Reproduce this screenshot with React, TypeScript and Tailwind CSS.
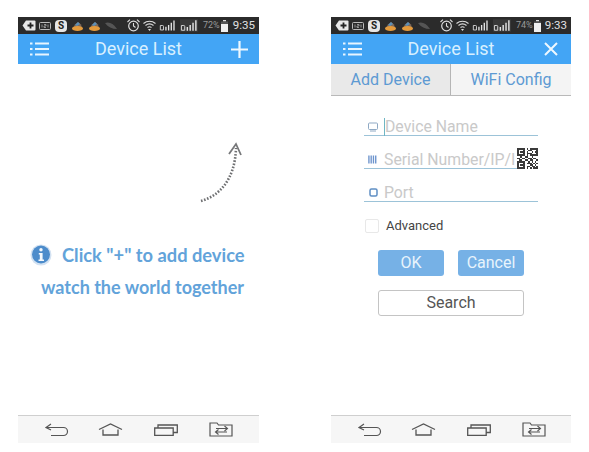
import React from "react";

const Sans = '[font-family:Roboto,"Liberation_Sans",sans-serif]';

function PlusBadge() {
  return (
    <svg width="14" height="11" viewBox="0 0 14 11" className="shrink-0">
      <path d="M4 0.500H12.500a1 1 0 0 1 1 1v8a1 1 0 0 1-1 1H4L0.500 5.500Z" fill="#e8e8e8" />
      <path d="M8.500 2.500v6M5.500 5.500h6" stroke="#222" strokeWidth="1.800" />
    </svg>
  );
}
function KeyBox() {
  return (
    <svg width="12" height="9" viewBox="0 0 12 9" className="shrink-0">
      <rect x="0.500" y="1.500" width="11" height="7" rx="1" fill="none" stroke="#bbb" strokeWidth="1" />
      <path d="M3 3.500v3M5 3.500h2v1.500H5v1.500h2M9 3.500v3" stroke="#bbb" strokeWidth="0.700" fill="none" />
    </svg>
  );
}
function SkypeIcon() {
  return (
    <span className="w-[12px] h-[12px] rounded-[4px] bg-[#e6e6e6] text-[#222] text-[10px] leading-[12px] font-bold text-center shrink-0">
      S
    </span>
  );
}
function Cloud() {
  return (
    <svg width="11" height="10" viewBox="0 0 11 10" className="shrink-0">
      <path d="M1 7 3 3.500 6 1l3 2.500 1 3.500Z" fill="#7d6a5c" />
      <path d="M3 4l3-3 2 2-3 2Z" fill="#5b8fb8" />
      <ellipse cx="5.500" cy="7.500" rx="5.500" ry="2.500" fill="#e39a3c" />
    </svg>
  );
}
function Leaf() {
  return (
    <svg width="12" height="7" viewBox="0 0 12 7" className="shrink-0">
      <path d="M0 1c4-1.500 8 0 12 6C7 7 3 5 0 1Z" fill="#555" />
    </svg>
  );
}
function Alarm() {
  return (
    <svg width="13" height="13" viewBox="0 0 13 13" className="shrink-0">
      <circle cx="6.500" cy="7" r="4.800" fill="none" stroke="#ddd" strokeWidth="1.200" />
      <path d="M6.500 4v3l2 1.500M0.500 3 3 0.700M12.500 3 10 0.700" stroke="#ddd" strokeWidth="1.100" fill="none" />
    </svg>
  );
}
function Wifi() {
  return (
    <svg width="13" height="11" viewBox="0 0 13 11" className="shrink-0">
      <path d="M0.500 3.500C4 0.500 9 0.500 12.500 3.500M2.500 5.500C5 3.500 8 3.500 10.500 5.500M4.500 7.500C5.500 6.700 7.500 6.700 8.500 7.500" stroke="#ddd" strokeWidth="1.100" fill="none" />
      <path d="M6.500 11 5 9h3Z" fill="#ddd" />
    </svg>
  );
}
function Signal({ boxed }: { boxed?: boolean }) {
  return (
    <svg width={boxed ? 18 : 17} height="13" viewBox="0 0 19 13" className="shrink-0">
      {boxed && <rect x="0" y="0" width="19" height="13" fill="#3a3a3a" />}
      <path d="M1.500 6.500h2.500a1 1 0 0 1 1 1v4H1.500Z" fill="none" stroke="#ddd" strokeWidth="1" />
      <path d="M7 12V8h1.500v4ZM10 12V6h1.500v6ZM13 12V3.500h1.500V12ZM16 12V1h1.500v11Z" fill="#e4e4e4" />
    </svg>
  );
}
function Battery({ level }: { level: number }) {
  return (
    <svg width="7" height="12" viewBox="0 0 7 12" className="shrink-0">
      <rect x="2" y="0" width="3" height="1.500" fill="#ddd" />
      <rect x="0" y="1.500" width="7" height="10.500" fill="#555" />
      <rect x="0" y={12 - level} width="7" height={level} fill="#f0f0f0" />
    </svg>
  );
}

function StatusBar({ percent, time, level }: { percent: string; time: string; level: number }) {
  return (
    <div className={`h-[17px] bg-[#2b2b2b] flex items-center pl-[4px] pr-[4px] ${Sans}`}>
      <PlusBadge />
      <div className="w-[3px] shrink-0" />
      <KeyBox />
      <div className="w-[4px] shrink-0" />
      <SkypeIcon />
      <div className="w-[5px] shrink-0" />
      <Cloud />
      <div className="w-[6px] shrink-0" />
      <Cloud />
      <div className="w-[5px] shrink-0" />
      <Leaf />
      <div className="w-[10px] shrink-0" />
      <Alarm />
      <div className="w-[3px] shrink-0" />
      <Wifi />
      <div className="w-[3px] shrink-0" />
      <Signal />
      <div className="w-[4px] shrink-0" />
      <Signal boxed />
      <span className="text-[9px] text-[#999] ml-[5px] w-[16px] shrink-0 whitespace-nowrap">{percent}</span>
      <div className="w-[2px] shrink-0" />
      <Battery level={level} />
      <span className="text-[11.500px] text-[#e2e2e2] ml-auto leading-none whitespace-nowrap">{time}</span>
    </div>
  );
}

function MenuIcon() {
  return (
    <svg width="19" height="14" viewBox="0 0 19 14">
      <path d="M0 1.500h2.500M0 7h2.500M0 12.500h2.500M5 1.500h14M5 7h14M5 12.500h14" stroke="#e8f5ff" strokeWidth="2" />
    </svg>
  );
}

function Header({ close }: { close?: boolean }) {
  return (
    <div className={`h-[30px] bg-[#43a5f5] flex items-center justify-between pl-[12px] pr-[12px] relative ${Sans}`}>
      <MenuIcon />
      <span className="text-[18px] text-[#d8f0ff] absolute left-0 right-0 text-center leading-[30px]">Device List</span>
      {close ? (
        <svg width="14" height="14" viewBox="0 0 14 14" className="mr-[1px]">
          <path d="M1 1l12 12M13 1 1 13" stroke="#eef8ff" strokeWidth="2" />
        </svg>
      ) : (
        <svg width="17" height="17" viewBox="0 0 17 17" className="-mr-[1px]">
          <path d="M8.500 0v17M0 8.500h17" stroke="#eef8ff" strokeWidth="2.200" />
        </svg>
      )}
    </div>
  );
}

function NavBar() {
  return (
    <div className="h-[28px] mt-auto bg-[#f6f6f6] border-t border-[#cfcfcf] flex items-center pl-[27px] gap-[30px]">
      <svg width="24" height="14" viewBox="0 0 24 14">
        <path d="M6 1 1 4.500 6 7M1 4.500h17.500a3.800 3.800 0 0 1 0 8H6" fill="none" stroke="#555" strokeWidth="1.200" />
      </svg>
      <svg width="25" height="13" viewBox="0 0 25 13" className="-ml-[1px]">
        <path d="M1 6.500 12.500 1 24 6.500M5 6.500V12h15V6.500" fill="none" stroke="#555" strokeWidth="1.300" />
      </svg>
      <svg width="24" height="12" viewBox="0 0 24 12" className="ml-[1px]">
        <path d="M0.700 4h18.500v7.300H0.700ZM4 3.500V1h19.300v7.500h-3.500" fill="none" stroke="#555" strokeWidth="1.300" />
      </svg>
      <svg width="24" height="15" viewBox="0 0 24 15" className="ml-[1px]">
        <path d="M1 14V1h7l1.500 2H23v11Z" fill="none" stroke="#555" strokeWidth="1.200" />
        <path d="M7 6.500h11M15.500 4l3 2.500-3 2.500M18 10H7M9.500 7.500 6.500 10l3 2.500" fill="none" stroke="#555" strokeWidth="1.100" />
      </svg>
    </div>
  );
}

function InfoIcon() {
  return (
    <svg width="22" height="22" viewBox="0 0 22 22" className="shrink-0">
      <circle cx="11" cy="11" r="10.500" fill="#d3e2f2" />
      <circle cx="11" cy="10.500" r="9" fill="#4d8ccb" />
      <circle cx="11" cy="5.800" r="1.700" fill="#f4f8fc" />
      <path d="M8.800 9h3.800v6.500h1.400v1.500H8.500v-1.500h1.300V10.500H8.800Z" fill="#f4f8fc" />
    </svg>
  );
}

function CurvedArrow() {
  return (
    <svg width="44" height="62" viewBox="0 0 44 62">
      <path d="M2 59C20 54 36 38 37 6" fill="none" stroke="#6f7072" strokeWidth="2.600" strokeDasharray="1.600 1.600" />
      <path d="M30 12 37 2l5 11" fill="none" stroke="#77787a" strokeWidth="1.800" />
    </svg>
  );
}

function HintScreen() {
  return (
    <div className="flex-1 flex flex-col bg-white">
      <div className="flex justify-end pr-[16px] pt-[78px]">
        <CurvedArrow />
      </div>
      <div className={`flex items-center mt-[39px] pl-[12px] text-[18.300px] font-bold text-[#62a3da] [font-family:Lato,"Open_Sans",sans-serif] leading-[24px]`}>
        <InfoIcon />
        <span className="ml-[10px] whitespace-nowrap">Click "+" to add device</span>
      </div>
      <div className={`mt-[8px] pl-[23px] text-[18px] font-bold text-[#62a3da] [font-family:Lato,"Open_Sans",sans-serif] leading-[24px] whitespace-nowrap`}>
        watch the world together
      </div>
    </div>
  );
}

function Qr() {
  const rows = [
    "1111101011111",
    "1000100110001",
    "1011101001011",
    "1000101110001",
    "1111101011111",
    "0010011001000",
    "1101100110110",
    "0110011011001",
    "1111100101010",
    "1000101110101",
    "1011100011010",
    "1000101101101",
    "1111101010111",
  ];
  return (
    <svg width="21" height="21" viewBox="0 0 13 13" className="absolute right-0 bottom-[-1px]" shapeRendering="crispEdges">
      <rect width="13" height="13" fill="#fff" />
      {rows.map((row, y) =>
        row.split("").map((c, x) => (c === "1" ? <rect key={`${x}-${y}`} x={x} y={y} width="1" height="1" fill="#3a3a3a" /> : null)),
      )}
    </svg>
  );
}

function Field({ icon, label, cursor, qr }: { icon: React.ReactNode; label: string; cursor?: boolean; qr?: boolean }) {
  return (
    <div className="relative h-[23px] w-[174px] border-b border-[#9cc3d8] flex items-center pl-[4px] pt-[5px]">
      <span className="w-[10px] flex justify-center shrink-0">{icon}</span>
      <span className={`ml-[6px] w-0 h-[18px] ${cursor ? "border-l border-[#6fb6c4]" : ""}`} />
      <span className="text-[15.800px] text-[#c9c9c9] leading-[17px] whitespace-nowrap overflow-hidden">{label}</span>
      {qr && <Qr />}
    </div>
  );
}

function FormScreen() {
  return (
    <div className={`flex-1 flex flex-col bg-white ${Sans}`}>
      <div className="h-[32px] flex border-b border-[#b9b9b9]">
        <div className="w-[120px] bg-[#e9e9e9] flex items-center justify-center text-[16px] text-[#5d9ad3] border-r border-[#b5b5b5]">
          Add Device
        </div>
        <div className="flex-1 bg-[#f4f4f4] flex items-center justify-center text-[16px] text-[#5d9ad3]">WiFi Config</div>
      </div>
      <div className="flex flex-col pl-[33px] pt-[17px] gap-[10px]">
        <Field
          cursor
          label="Device Name"
          icon={
            <svg width="10" height="10" viewBox="0 0 10 10">
              <rect x="0.500" y="1" width="9" height="6.500" rx="1" fill="none" stroke="#8fa9c4" />
              <path d="M2 9h6" stroke="#8fa9c4" />
            </svg>
          }
        />
        <Field
          qr
          label="Serial Number/IP/I"
          icon={
            <svg width="11" height="9" viewBox="0 0 11 9">
              <path d="M1 0v9M3.500 0v9M6 0v9M8.500 0v9" stroke="#6c93cc" strokeWidth="1.500" />
            </svg>
          }
        />
        <Field
          label="Port"
          icon={
            <svg width="9" height="9" viewBox="0 0 9 9">
              <rect x="1" y="1" width="7" height="7" rx="1.500" fill="none" stroke="#5f8fc4" strokeWidth="1.500" />
            </svg>
          }
        />
      </div>
      <div className="flex items-center pl-[34px] mt-[14px]">
        <span className="w-[14px] h-[14px] rounded-[2px] border border-[#e8e8e8] bg-white" />
        <span className="ml-[7px] text-[13px] text-[#444]">Advanced</span>
      </div>
      <div className="flex pl-[47px] gap-[14px] mt-[14px]">
        <div className="w-[66px] h-[26px] rounded-[3px] bg-[#76b1e6] flex items-center justify-center text-[16px] text-[#e8f4fc]">OK</div>
        <div className="w-[66px] h-[26px] rounded-[3px] bg-[#76b1e6] flex items-center justify-center text-[16px] text-[#e8f4fc]">Cancel</div>
      </div>
      <div className="ml-[47px] mt-[14px] w-[146px] h-[26px] rounded-[3px] border border-[#c4c4c4] bg-white flex items-center justify-center text-[16px] text-[#555]">
        Search
      </div>
    </div>
  );
}

export default function App() {
  return (
    <div className="w-[589px] h-[452px] bg-white flex pl-[18px] pt-[17px] gap-[72px] overflow-hidden">
      <div className="w-[241px] h-[426px] flex flex-col">
        <StatusBar percent="72%" time="9:35" level={8} />
        <Header />
        <HintScreen />
        <NavBar />
      </div>
      <div className="w-[240px] h-[426px] flex flex-col">
        <StatusBar percent="74%" time="9:33" level={9} />
        <Header close />
        <FormScreen />
        <NavBar />
      </div>
    </div>
  );
}
